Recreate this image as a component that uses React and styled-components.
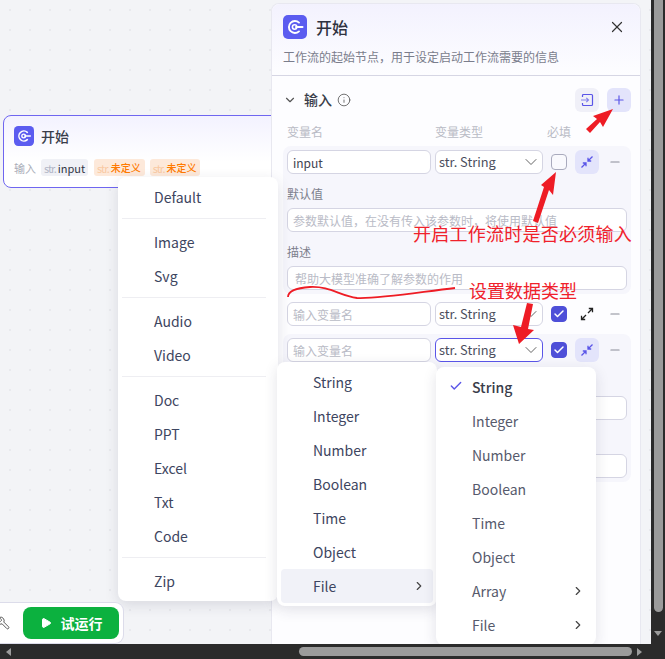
import React from 'react';
import styled, { createGlobalStyle } from 'styled-components';
import { X, ChevronDown, ChevronRight, Plus, Minus, Info, Check, Play, Wrench } from 'lucide-react';

const GlobalStyle = createGlobalStyle`
  html, body { margin: 0; padding: 0; height: 100%; overflow: hidden; }
  body { font-family: "Noto Sans CJK SC", "Noto Sans", sans-serif; font-size: 14px; color: #333a52; }
  * { box-sizing: border-box; }
`;

const Window = styled.div`
  width: 665px;
  height: 659px;
  display: flex;
  flex-direction: column;
  overflow: hidden;
`;

const Main = styled.div`
  flex: 1;
  min-height: 0;
  display: flex;
`;

const Canvas = styled.div`
  position: relative;
  flex: 1;
  overflow: hidden;
  display: flex;
  justify-content: flex-end;
  background-color: #f3f4f7;
  background-image: radial-gradient(#e9eaee 1px, transparent 1px);
  background-size: 20px 20px;
`;

/* scrollbars */
const VBar = styled.div`
  width: 14px;
  background: #2b2b2b;
  display: flex;
  flex-direction: column;
  align-items: center;
  padding-bottom: 4px;
`;
const VThumb = styled.div`
  width: 9px;
  height: 612px;
  background: #9b9b9b;
  border-radius: 0 0 5px 5px;
`;
const DownArrow = styled.div`
  margin-top: auto;
  margin-bottom: 4px;
  border-left: 4px solid transparent;
  border-right: 4px solid transparent;
  border-top: 5px solid #9b9b9b;
`;
const HBar = styled.div`
  height: 15px;
  background: #2b2b2b;
  display: flex;
  align-items: center;
  padding: 0 20px 0 6px;
`;
const LeftArrow = styled.div`
  border-top: 4px solid transparent;
  border-bottom: 4px solid transparent;
  border-right: 5px solid #9b9b9b;
`;
const RightArrow = styled.div`
  margin-left: 5px;
  border-top: 4px solid transparent;
  border-bottom: 4px solid transparent;
  border-left: 5px solid #9b9b9b;
`;
const HThumb = styled.div`
  width: 333px;
  height: 9px;
  margin-left: 288px;
  background: #9b9b9b;
  border-radius: 5px;
`;

/* workflow node on the canvas */
const Node = styled.div`
  position: absolute;
  left: 3px;
  top: 115px;
  width: 300px;
  height: 73px;
  padding: 10px 10px;
  background: linear-gradient(#f3f2ff, #fff 65%);
  border: 1px solid #6f66f0;
  border-radius: 8px;
`;
const NodeHead = styled.div`
  display: flex;
  align-items: center;
  gap: 7px;
  font-size: 14px;
  font-weight: 500;
  color: #3a3d4a;
`;
const NodeRow = styled.div`
  display: flex;
  align-items: center;
  margin-top: 13px;
  height: 17px;
  font-size: 11px;
`;
const NodeLabel = styled.span`
  color: #a9adb8;
  width: 27px;
`;
const Tag = styled.span`
  display: inline-flex;
  align-items: center;
  height: 17px;
  padding: 0 ${p => (p.$warn ? 4 : 3)}px 0 3px;
  margin-right: ${p => (p.$warn ? 5 : 6)}px;
  border-radius: 3px;
  font-size: ${p => (p.$warn ? 10 : 11)}px;
  font-weight: ${p => (p.$warn ? 500 : 400)};
  background: ${p => (p.$warn ? '#fde9da' : '#f0f1f6')};
  color: ${p => (p.$warn ? '#ff7a00' : '#333746')};
`;
const TagType = styled.span`
  font-size: 11px;
  font-weight: 400;
  letter-spacing: -1px;
  margin-right: 2px;
  color: ${p => (p.$warn ? '#f9c9a3' : '#b3b7c6')};
`;

/* side panel */
const Panel = styled.aside`
  position: relative;
  width: 370px;
  margin: 3px 10px 0 0;
  background: #fdfdff;
  border: 1px solid #e8e8f0;
  border-bottom: none;
  border-radius: 8px 8px 0 0;
`;
const PanelHeader = styled.header`
  padding: 11px 11px 8px;
  height: 72px;
  background: linear-gradient(#f3f2fe, #fdfdff);
  border-bottom: 1px solid #d6d6e4;
  border-radius: 8px 8px 0 0;
`;
const TitleRow = styled.div`
  display: flex;
  align-items: center;
  gap: 9px;
  height: 24px;
  font-size: 16px;
  font-weight: 500;
  color: #2f3240;
`;
const CloseButton = styled.div`
  margin-left: auto;
  margin-right: 3px;
  display: flex;
  color: #333;
`;
const Description = styled.p`
  margin: 8px 0 0;
  font-size: 12px;
  line-height: 20px;
  color: #7a7d8c;
`;
const Section = styled.section`
  padding: 12px 9px 0 11px;
`;
const SectionHead = styled.div`
  display: flex;
  align-items: center;
  height: 24px;
  font-size: 14px;
  font-weight: 500;
  color: #3a3d4a;
`;
const SectionTitle = styled.span`
  margin: 0 5px 0 7px;
  padding-bottom: 3px;
`;
const HeadActions = styled.div`
  margin-left: auto;
  display: flex;
  gap: 8px;
`;
const IconButton = styled.div`
  width: 24px;
  height: 24px;
  flex: none;
  display: flex;
  align-items: center;
  justify-content: center;
  border-radius: 6px;
  background: ${p => (p.$tone === 'active' ? '#e3e4fb' : p.$tone === 'soft' ? '#f0f0f8' : 'transparent')};
  color: ${p => (p.$tone === 'plain' ? '#222' : '#5a55e8')};
`;
const Columns = styled.div`
  display: flex;
  margin-top: 10px;
  padding-left: 4px;
  height: 20px;
  font-size: 12px;
  line-height: 20px;
  color: #b9bbc5;
`;
const Column = styled.span`
  width: ${p => p.$w}px;
`;
const VarCard = styled.div`
  margin-top: 4px;
  padding: 4px;
  border-radius: 8px;
  background: ${p => (p.$open ? '#f6f6fc' : 'transparent')};
`;
const VarLine = styled.div`
  display: flex;
  align-items: center;
  gap: 4px;
`;
const Field = styled.div`
  display: flex;
  align-items: center;
  flex: none;
  height: 24px;
  padding: 0 5px 0 ${p => (p.$indent ? 7 : 5)}px;
  background: #fff;
  border: 1px solid ${p => (p.$focus ? '#5a55e8' : '#d5d5e3')};
  border-radius: 6px;
  font-size: 12px;
  color: ${p => (p.$empty ? '#b9bbc6' : '#3f4250')};
  white-space: nowrap;
  overflow: hidden;
  width: ${p => (p.$w ? `${p.$w}px` : 'auto')};
`;
const TypeText = styled.span`
  font-size: 12.8px;
  line-height: 20px;
  margin-left: -2px;
  color: #4a4d5c;
`;
const TypeChevron = styled.span`
  margin-left: auto;
  margin-right: -4px;
  display: flex;
  color: #555;
`;
const CheckBox = styled.div`
  width: 16px;
  height: 16px;
  margin: 0 4px;
  flex: none;
  display: flex;
  align-items: center;
  justify-content: center;
  border-radius: 4px;
  border: 1px solid ${p => (p.$on ? '#4e4fd8' : '#a9aabd')};
  background: ${p => (p.$on ? '#4e4fd8' : '#f9f9fd')};
  color: #fff;
`;
const RemoveButton = styled.div`
  width: 24px;
  display: flex;
  justify-content: center;
  color: #8a8c98;
`;
const ExtraLabel = styled.div`
  margin-top: 10px;
  margin-bottom: 4px;
  font-size: 12px;
  line-height: 20px;
  color: #7d808d;
`;

/* dropdown menus */
const Menu = styled.div`
  position: absolute;
  left: ${p => p.$x}px;
  top: ${p => p.$y}px;
  width: 160px;
  padding: 3px 4px;
  background: #fff;
  border-radius: 8px;
  box-shadow: 0 4px 14px rgba(40, 40, 70, 0.13);
  color: ${p => (p.$muted ? '#565a6c' : '#3d4560')};
`;
const MenuItem = styled.div`
  display: flex;
  align-items: center;
  height: 34px;
  padding: 0 7px 0 32px;
  position: relative;
  border-radius: 4px;
  font-size: 14px;
  font-weight: ${p => (p.$selected ? 500 : 400)};
  color: ${p => (p.$selected ? '#3a3d4a' : 'inherit')};
  background: ${p => (p.$hover ? '#f1f2f8' : 'transparent')};
`;
const ItemCheck = styled.span`
  position: absolute;
  left: 9px;
  top: 9px;
  display: flex;
  color: #5a55e8;
`;
const ItemArrow = styled.span`
  margin-left: auto;
  display: flex;
  color: #444;
`;
const MenuDivider = styled.div`
  height: 1px;
  width: 144px;
  margin: 4px 0 6px;
  background: #eeeef2;
`;

/* bottom toolbar */
const Toolbar = styled.div`
  position: absolute;
  left: -8px;
  top: 603px;
  display: flex;
  align-items: center;
  gap: 6px;
  height: 40px;
  padding: 4px;
  background: #fff;
  border-radius: 8px;
  box-shadow: 0 0 0 1px #dcdcea;
`;
const ToolIcon = styled.span`
  display: flex;
  color: #444;
  width: 21px;
  transform: scaleX(-1);
  justify-content: flex-end;
`;
const RunButton = styled.div`
  width: 96px;
  height: 32px;
  display: flex;
  align-items: center;
  justify-content: center;
  gap: 9px;
  border-radius: 8px;
  background: #0cb13f;
  color: #fff;
  font-size: 14px;
  font-weight: 700;
`;

/* red hand-drawn notes */
const Notes = styled.svg`
  position: absolute;
  left: 0;
  top: 0;
  width: 651px;
  height: 644px;
  pointer-events: none;
`;
const NoteText = styled.span`
  position: absolute;
  left: ${p => p.$x}px;
  top: ${p => p.$y}px;
  font-size: 18px;
  line-height: 24px;
  letter-spacing: ${p => p.$track || 0}px;
  color: #f0212b;
  white-space: nowrap;
`;

const StartIcon = ({ size }) => (
  <svg width={size} height={size} viewBox="0 0 24 24">
    <rect width="24" height="24" rx="5" fill="#5b5cf0" />
    <path d="M16 7.6a6 6 0 1 0 0 8.8" fill="none" stroke="#fff" strokeWidth="1.9" strokeLinecap="round" />
    <circle cx="11.6" cy="12" r="2.2" fill="none" stroke="#fff" strokeWidth="1.6" />
    <path d="M13 12h6.5" stroke="#fff" strokeWidth="2" strokeLinecap="round" />
  </svg>
);

const ImportIcon = () => (
  <svg width="14" height="14" viewBox="0 0 14 14" fill="none" stroke="#5a55e8" strokeWidth="1.2">
    <path d="M2.5 4V2.5a1 1 0 0 1 1-1h8a1 1 0 0 1 1 1v9a1 1 0 0 1-1 1h-8a1 1 0 0 1-1-1V10" />
    <path d="M1 7h7.5M6.3 4.8 8.5 7 6.3 9.2" opacity="0.7" />
  </svg>
);

const CollapseIcon = () => (
  <svg width="14" height="14" viewBox="0 0 14 14" fill="none" stroke="#5a55e8" strokeWidth="1.3">
    <path d="M1.5 12.5 6 8M2.8 8H6v3.2" />
    <path d="M12.5 1.5 8 6M11.2 6H8V2.8" />
  </svg>
);

const ExpandIcon = () => (
  <svg width="14" height="14" viewBox="0 0 14 14" fill="none" stroke="#222" strokeWidth="1.3">
    <path d="M6 8 1.5 12.5M1.5 8.8v3.7h3.7" />
    <path d="M8 6l4.5-4.5M8.8 1.5h3.7v3.7" />
  </svg>
);

const VarRow = ({ name, empty, checked, open, focus }) => (
  <VarCard $open={open}>
    <VarLine>
      <Field $w={144} $empty={empty}>{name}</Field>
      <Field $w={108} $focus={focus}>
        <TypeText>str. String</TypeText>
        <TypeChevron><ChevronDown size={20} strokeWidth={1.1} /></TypeChevron>
      </Field>
      <CheckBox $on={checked}>{checked && <Check size={12} strokeWidth={3} />}</CheckBox>
      <IconButton $tone={open ? 'active' : 'plain'}>{open ? <CollapseIcon /> : <ExpandIcon />}</IconButton>
      <RemoveButton><Minus size={14} /></RemoveButton>
    </VarLine>
    {open && (
      <>
        <ExtraLabel>默认值</ExtraLabel>
        <Field $empty>参数默认值，在没有传入该参数时，将使用默认值</Field>
        <ExtraLabel>描述</ExtraLabel>
        <Field $empty $indent>帮助大模型准确了解参数的作用</Field>
      </>
    )}
  </VarCard>
);

const fileGroups = [
  ['Default'],
  ['Image', 'Svg'],
  ['Audio', 'Video'],
  ['Doc', 'PPT', 'Excel', 'Txt', 'Code'],
  ['Zip'],
];
const subTypes = ['String', 'Integer', 'Number', 'Boolean', 'Time', 'Object'];

export default function App() {
  return (
    <Window>
      <GlobalStyle />
      <Main>
        <Canvas>
          <Node>
            <NodeHead><StartIcon size={20} />开始</NodeHead>
            <NodeRow>
              <NodeLabel>输入</NodeLabel>
              <Tag><TagType>str.</TagType>input</Tag>
              <Tag $warn><TagType $warn>str.</TagType>未定义</Tag>
              <Tag $warn><TagType $warn>str.</TagType>未定义</Tag>
            </NodeRow>
          </Node>

          <Panel>
            <PanelHeader>
              <TitleRow>
                <StartIcon size={24} />
                开始
                <CloseButton><X size={18} strokeWidth={1.6} /></CloseButton>
              </TitleRow>
              <Description>工作流的起始节点，用于设定启动工作流需要的信息</Description>
            </PanelHeader>
            <Section>
              <SectionHead>
                <ChevronDown size={14} color="#555" />
                <SectionTitle>输入</SectionTitle>
                <Info size={14} strokeWidth={1.4} color="#555" />
                <HeadActions>
                  <IconButton $tone="soft"><ImportIcon /></IconButton>
                  <IconButton $tone="active"><Plus size={14} /></IconButton>
                </HeadActions>
              </SectionHead>
              <Columns>
                <Column $w={148}>变量名</Column>
                <Column $w={112}>变量类型</Column>
                <Column $w={40}>必填</Column>
              </Columns>
              <VarRow name="input" open />
              <VarRow name="输入变量名" empty checked />
              <VarRow name="输入变量名" empty checked open focus />
            </Section>
          </Panel>

          <Menu $x={118} $y={177}>
            {fileGroups.map((group, i) => (
              <React.Fragment key={group[0]}>
                {i > 0 && <MenuDivider />}
                {group.map(item => <MenuItem key={item}>{item}</MenuItem>)}
              </React.Fragment>
            ))}
          </Menu>

          <Menu $x={277} $y={362}>
            {subTypes.map(item => <MenuItem key={item}>{item}</MenuItem>)}
            <MenuItem $hover>File<ItemArrow><ChevronRight size={14} /></ItemArrow></MenuItem>
          </Menu>

          <Menu $x={436} $y={367} $muted>
            {subTypes.map((item, i) => (
              <MenuItem key={item} $selected={i === 0}>
                {i === 0 && <ItemCheck><Check size={14} strokeWidth={2.4} /></ItemCheck>}
                {item}
              </MenuItem>
            ))}
            <MenuItem>Array<ItemArrow><ChevronRight size={14} /></ItemArrow></MenuItem>
            <MenuItem>File<ItemArrow><ChevronRight size={14} /></ItemArrow></MenuItem>
          </Menu>

          <Toolbar>
            <ToolIcon><Wrench size={14} strokeWidth={1.5} /></ToolIcon>
            <RunButton><Play size={12} fill="#fff" />试运行</RunButton>
          </Toolbar>

          <Notes viewBox="0 0 651 644">
            <path d="M613 109 603 127 600 122 590 133 586 129 597 119 593 116Z" fill="#ee1c25" />
            <path d="M556 172 553 195 549 190 538 223 533 221 544 187 541 185Z" fill="#ee1c25" />
            <path d="M519 344 513 325 521 327 527 303 533 304 528 329 534 330Z" fill="#ee1c25" />
            <path d="M288 297C288 291 296 288 310 287C330 286 340 296 357 298C380 299 420 292 455 288" fill="none" stroke="#ee1c25" strokeWidth="1.8" />
          </Notes>
          <NoteText $x={413} $y={221} $track={0.25}>开启工作流时是否必须输入</NoteText>
          <NoteText $x={469} $y={278}>设置数据类型</NoteText>
        </Canvas>
        <VBar>
          <VThumb />
          <DownArrow />
        </VBar>
      </Main>
      <HBar>
        <LeftArrow />
        <HThumb />
        <RightArrow />
      </HBar>
    </Window>
  );
}
